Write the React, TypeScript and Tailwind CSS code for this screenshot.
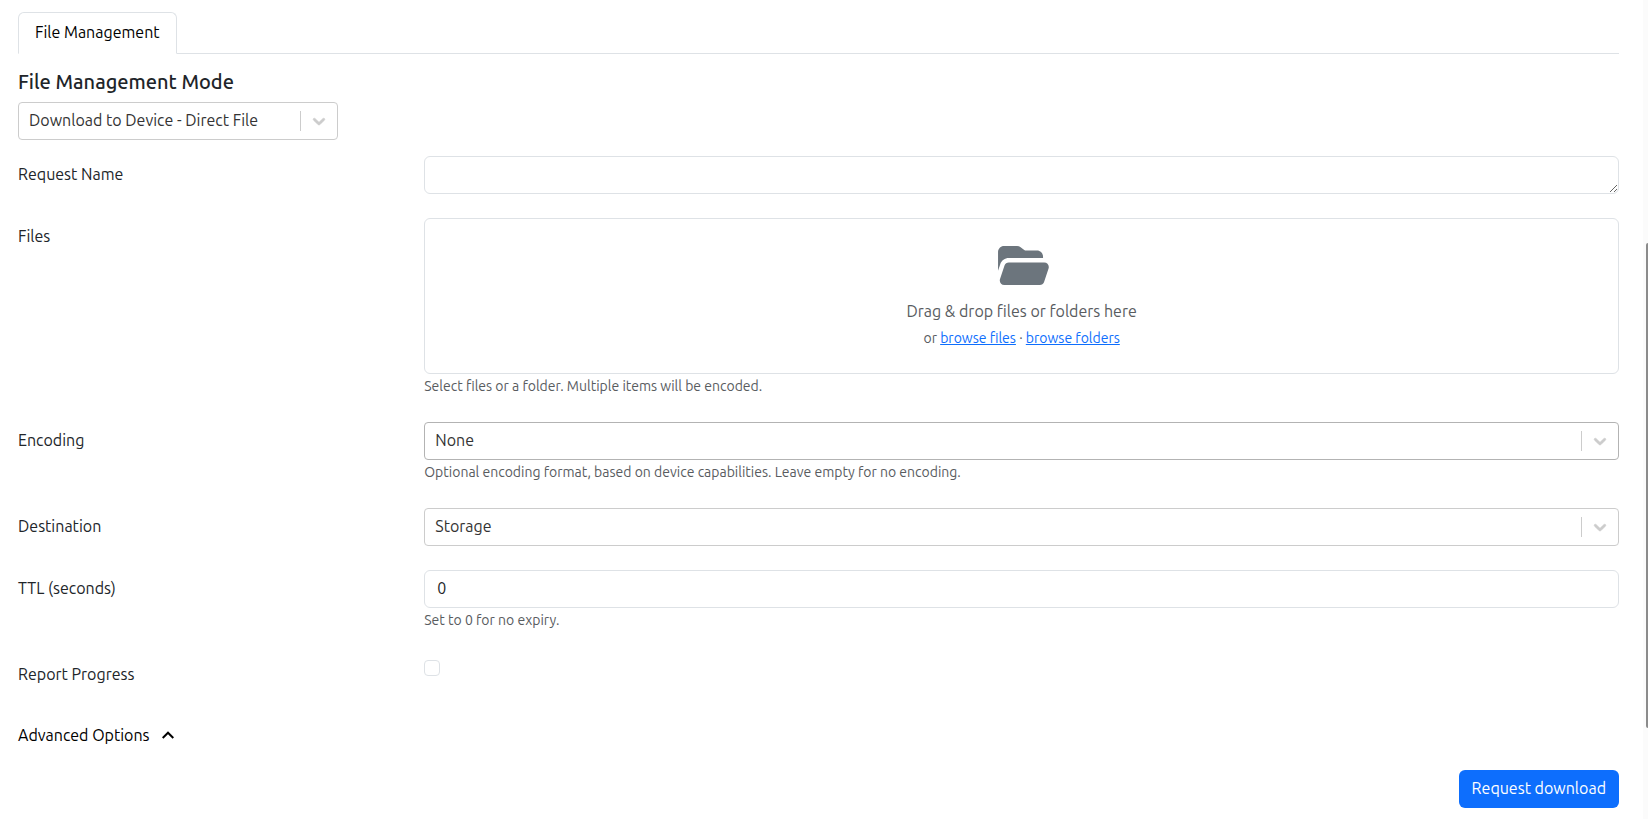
import React, { useState } from "react";

interface SelectFieldProps {
    id: string;
    options: string[];
    active?: boolean;
}

interface FormRowProps {
    id: string;
    label: string;
    help?: string;
    children: React.ReactNode;
}

const SelectField: React.FC<SelectFieldProps> = ({ id, options, active }) => {
    return (
        <div className="relative">
            <select
                id={id}
                className={`block h-[38px] w-full appearance-none rounded-sm border bg-white pr-12 pb-0.5 pl-2.5 text-[#333333] outline-none ${
                    active ? "border-[#b3b3b3]" : "border-[#cccccc]"
                }`}
            >
                {options.map((option) => (
                    <option key={option}>{option}</option>
                ))}
            </select>
            <div className="pointer-events-none absolute inset-y-0 right-px flex items-center text-[#cccccc]">
                <span className="h-5 w-px bg-[#cccccc]" />
                <svg
                    className="m-2 h-5 w-5"
                    viewBox="0 0 20 20"
                    fill="currentColor"
                    stroke="currentColor"
                    strokeWidth="0.6"
                    aria-hidden="true"
                >
                    <path d="M4.516 7.548c0.436-0.446 1.043-0.481 1.576 0l3.908 3.747 3.908-3.747c0.533-0.481 1.141-0.446 1.574 0 0.436 0.445 0.408 1.197 0 1.615-0.406 0.418-4.695 4.502-4.695 4.502-0.217 0.223-0.502 0.335-0.787 0.335s-0.57-0.112-0.789-0.335c0 0-4.287-4.084-4.695-4.502s-0.436-1.17 0-1.615z" />
                </svg>
            </div>
        </div>
    );
};

const FormRow: React.FC<FormRowProps> = ({ id, label, help, children }) => {
    return (
        <div className="mb-6 grid grid-cols-4 gap-x-6">
            <label htmlFor={id} className="pt-1.5 pb-2 leading-6">
                {label}
            </label>
            <div className="col-span-3">
                {children}
                {help && <p className="mt-0.5 mb-0.5 text-sm text-[#595c5f]">{help}</p>}
            </div>
        </div>
    );
};

const App: React.FC = () => {
    const [requestName, setRequestName] = useState("");
    const [ttl, setTtl] = useState("0");
    const [reportProgress, setReportProgress] = useState(false);

    return (
        <div className="relative min-h-screen bg-white pt-3 pr-[29px] pb-2.5 pl-[18px] font-[Ubuntu,Roboto,sans-serif] text-base text-[#212529]">
            <div className="flex border-b border-[#dee2e6]" role="tablist">
                <button
                    type="button"
                    role="tab"
                    aria-selected="true"
                    className="-mb-px rounded-t-md border border-[#dee2e6] border-b-white bg-white px-4 pt-[7px] pb-[9px] leading-6 text-black"
                >
                    File Management
                </button>
            </div>

            <div className="mt-4 mb-4 w-80">
                <label htmlFor="mode" className="mb-2 block text-xl leading-6 font-medium">
                    File Management Mode
                </label>
                <SelectField id="mode" options={["Download to Device - Direct File"]} />
            </div>

            <form onSubmit={(e) => e.preventDefault()}>
                <FormRow id="request-name" label="Request Name">
                    <textarea
                        id="request-name"
                        rows={1}
                        value={requestName}
                        onChange={(e) => setRequestName(e.target.value)}
                        className="block h-[38px] w-full rounded-md border border-[#dee2e6] px-3 py-1.5 outline-none"
                    />
                </FormRow>

                <FormRow id="files" label="Files" help="Select files or a folder. Multiple items will be encoded.">
                    <div
                        id="files"
                        className="flex flex-col items-center rounded-md border border-[#dee2e6] px-6 pt-6 pb-[25px] text-[#595c5f]"
                    >
                        <svg className="mb-2 h-12 w-[54px] text-[#6c757d]" viewBox="0 0 576 512" fill="currentColor" aria-hidden="true">
                            <path d="M56 225.6L32.4 296.2 32.4 96c0-35.3 28.7-64 64-64l138.7 0c13.8 0 27.3 4.5 38.4 12.8l38.4 28.8c5.5 4.2 12.3 6.4 19.2 6.4l117.3 0c35.3 0 64 28.7 64 64l0 16-365.4 0c-41.3 0-78 26.4-91.1 65.6zM477.8 448L99 448c-32.8 0-55.9-32.1-45.5-63.2l48-144C108 221.2 126.4 208 147 208l378.8 0c32.8 0 55.9 32.1 45.5 63.2l-48 144c-6.5 19.6-24.9 32.8-45.5 32.8z" />
                        </svg>
                        <p>Drag &amp; drop files or folders here</p>
                        <p className="mt-[5px] text-sm">
                            or{" "}
                            <a href="#files" className="text-[#0d6efd] underline">
                                browse files
                            </a>{" "}
                            ·{" "}
                            <a href="#folders" className="text-[#0d6efd] underline">
                                browse folders
                            </a>
                        </p>
                    </div>
                </FormRow>

                <FormRow
                    id="encoding"
                    label="Encoding"
                    help="Optional encoding format, based on device capabilities. Leave empty for no encoding."
                >
                    <SelectField id="encoding" options={["None"]} active />
                </FormRow>

                <FormRow id="destination" label="Destination">
                    <SelectField id="destination" options={["Storage"]} />
                </FormRow>

                <FormRow id="ttl" label="TTL (seconds)" help="Set to 0 for no expiry.">
                    <input
                        id="ttl"
                        type="text"
                        inputMode="numeric"
                        value={ttl}
                        onChange={(e) => setTtl(e.target.value)}
                        className="block h-[38px] w-full rounded-md border border-[#dee2e6] px-3 pt-[5px] pb-[7px] outline-none"
                    />
                </FormRow>

                <FormRow id="report-progress" label="Report Progress">
                    <input
                        id="report-progress"
                        type="checkbox"
                        checked={reportProgress}
                        onChange={(e) => setReportProgress(e.target.checked)}
                        className="mt-1 block h-4 w-4 appearance-none rounded-sm border border-[#dee2e6] checked:bg-[#0d6efd]"
                    />
                </FormRow>

                <button type="button" className="flex items-center gap-3 pt-[5px] pb-[7px] leading-6 text-black">
                    Advanced Options
                    <svg className="h-2 w-3" viewBox="0 0 12 8" fill="none" stroke="currentColor" strokeWidth="2" aria-hidden="true">
                        <path d="M0.7 7L6 1.7L11.3 7" />
                    </svg>
                </button>

                <div className="mt-4 flex justify-end">
                    <button type="submit" className="h-[38px] rounded-md bg-[#0d6efd] px-[13px] pb-0.5 text-white">
                        Request download
                    </button>
                </div>
            </form>

            {/* scroll track */}
            <div className="absolute inset-y-0 right-0 flex w-[5px] justify-end bg-[#fbfbfb] pt-[243px]">
                <div className="h-[485px] w-0.5 rounded-l-sm bg-[#8b8b8b]" />
            </div>
        </div>
    );
};

export default App;
